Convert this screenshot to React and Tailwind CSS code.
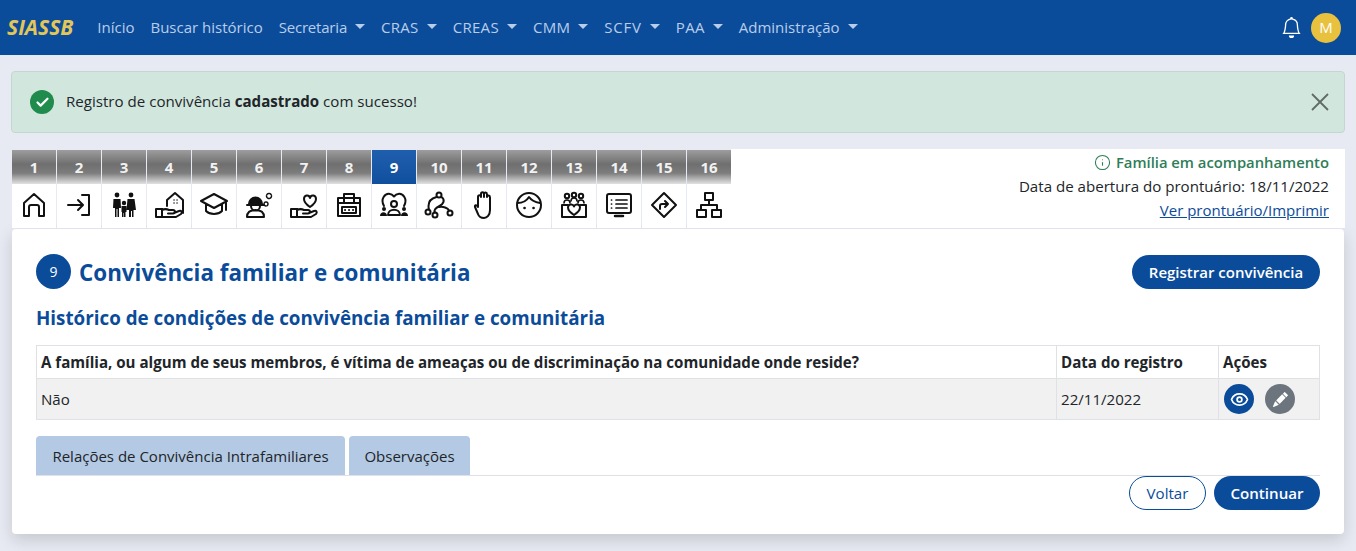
import { Check, Eye, Info } from 'lucide-react';

const menu = [
  { label: 'Início' },
  { label: 'Buscar histórico' },
  { label: 'Secretaria', drop: true, cls: 'tracking-[-0.2px]' },
  { label: 'CRAS', drop: true, cls: 'tracking-[0.3px]' },
  { label: 'CREAS', drop: true, cls: 'tracking-[0.3px]' },
  { label: 'CMM', drop: true, cls: 'tracking-[0.3px]' },
  { label: 'SCFV', drop: true, cls: 'tracking-[0.8px]' },
  { label: 'PAA', drop: true, cls: 'tracking-[0.3px]' },
  { label: 'Administração', drop: true },
];

const Ic = ({ children }) => (
  <svg width="30" height="30" viewBox="0 0 30 30" fill="none" stroke="#111" strokeWidth="2" strokeLinecap="round" strokeLinejoin="round">
    {children}
  </svg>
);

const hand = <path d="M2 19h6v8H2zM8 20c3-1.500 5-1 7 0h4c2.500 0 2.500 3.500 0 3.500h-5M20 23l5-2c2.500-1 3.500 1.500 2 3l-5 3H8" />;

const icons = [
  <Ic><path d="M5 26V13L15 4l10 9v13h-5V17c0-1-1-2-2-2h-6c-1 0-2 1-2 2v9z" /></Ic>,
  <Ic><path d="M4 15h14M14 10l5 5-5 5M18 5h7v20h-7" /></Ic>,
  <Ic>
    <g fill="#111" stroke="none">
      <circle cx="8" cy="5" r="2.400" /><circle cx="22" cy="5" r="2.400" /><circle cx="15" cy="13" r="2.200" />
      <path d="M4.500 9h7l.5 9h-2v9H8.500v-8h-1v8H6v-9H4zM18.500 9h7l1.500 11h-2.500v7H23v-6h-1v6h-2v-7h-2.500zM12.500 16h5v6h-1v5H15v-4h-.5v4H13v-5h-.5z" />
    </g>
  </Ic>,
  <Ic>
    <path d="M13 16v-6l8-7 8 7v13" />{hand}
    <path d="M20 10h.1M23 10h.1M20 13h.1M23 13h.1" strokeWidth="1.400" />
  </Ic>,
  <Ic><path d="M15 4L2 11l13 7 13-7zM7 14v7c4 4 12 4 16 0v-7M27 12v8" /></Ic>,
  <Ic>
    <path d="M5 14a6.500 6.500 0 0 1 13 0z" fill="#111" />
    <path d="M3 15h17M7 16a4.500 4.500 0 0 0 9 0M3 27c0-6 4-7 8.500-7s8.500 1 8.500 7z" />
    <circle cx="25" cy="6" r="2.500" strokeWidth="1.500" strokeDasharray="2 1" /><circle cx="22" cy="14" r="2" strokeWidth="1.500" strokeDasharray="2 1" />
  </Ic>,
  <Ic>
    {hand}
    <path d="M21 17c-3-2-6-4.500-6-8 0-4 5-5 6-1 1-4 6-3 6 1 0 3.500-3 6-6 8z" />
  </Ic>,
  <Ic>
    <path d="M4 8h22v18H4zM10 8V4h10v4M4 13h22M10 8v5M20 8v5M8 17h14v6H8z" />
    <path d="M11 20h.1M15 20h.1M19 20h.1" />
  </Ic>,
  <Ic>
    <path d="M5 16C1 9 6 3 11 4c2 .3 3 1.500 4 2.500 1-1 2-2.200 4-2.500 5-1 10 5 6 12" />
    <circle cx="15" cy="14" r="3" />
    <path d="M9 25c0-7 12-7 12 0z" />
    <g fill="#111" stroke="none"><circle cx="5" cy="19" r="2" /><circle cx="25" cy="19" r="2" /><path d="M1 26c0-5 7-5 7 0zM22 26c0-5 7-5 7 0z" /></g>
  </Ic>,
  <Ic>
    <circle cx="15" cy="5" r="2.500" /><circle cx="4" cy="22" r="2.500" /><circle cx="11" cy="25" r="2.500" /><circle cx="26" cy="23" r="2.500" />
    <path d="M12.500 7c-4 1-8 4-8 9 0 1.500 0 2 .5 3.500M17.500 7c4 3 2 7-2 9s-6 4-4.500 6.500M15 17c4-1 9 1 10 3.500" />
  </Ic>,
  <Ic>
    <path d="M9 17V7c0-2.500 3-2.500 3 0V4c0-2.500 3-2.500 3 0v3-3c0-2 3-2 3 .5V7c0-2 3-2 3 .5V20c0 5-3 8-6 8s-5-1-6-4l-3-7c-.5-2 1.500-2.500 3 0z" />
  </Ic>,
  <Ic>
    <circle cx="15" cy="15" r="12" />
    <path d="M3.500 13c4 0 9-2 11.500-6 2 3 6 5 11 6" />
    <path d="M10.500 18h.1M19.500 18h.1" strokeWidth="2.600" />
  </Ic>,
  <Ic>
    <circle cx="8" cy="6" r="2.200" /><circle cx="15" cy="5" r="2.200" /><circle cx="22" cy="6" r="2.200" />
    <path d="M5 13c0-2 1-3 3-3s3 1 3 3M12 11c0-2 1-3 3-3s3 1 3 3M19 13c0-2 1-3 3-3s3 1 3 3" strokeWidth="1.600" />
    <path d="M9 15H3v12h24V15h-6" />
    <path d="M15 25c-3-2-6-4-6-7.500 0-3.500 5-4 6-1 1-3 6-2.500 6 1 0 3.500-3 5.500-6 7.500z" />
  </Ic>,
  <Ic>
    <rect x="3" y="4" width="24" height="19" rx="2" />
    <path d="M11 26h8" strokeWidth="2.500" />
    <path d="M12 10h11M12 14h11M12 18h11M7.500 10h.1M7.500 14h.1M7.500 18h.1" strokeWidth="1.700" />
  </Ic>,
  <Ic>
    <path d="M15 3l12 12-12 12L3 15z" />
    <path d="M11 19v-3c0-1 1-2 2-2h6M16 11l3 3-3 3" />
  </Ic>,
  <Ic>
    <path d="M11 3h8v7h-8zM3 20h9v7H3zM18 20h9v7h-9zM15 10v5M7 20v-5h16v5" />
  </Ic>,
];

const Stepper = () => (
  <div className="flex shrink-0 gap-px">
    {icons.map((icon, i) => (
      <div key={i} className="w-[44px]">
        <div className={`h-[34px] flex items-center justify-center text-[15px] font-bold ${i === 8 ? 'text-white bg-[linear-gradient(#1f5fae,#0f4f9e)]' : 'text-[#f2f2f2] bg-[linear-gradient(#9d9d9d,#6f6f6f_42%,#7d7d7d_68%,#e2e2e2)]'}`}>
          {i + 1}
        </div>
        <div className="h-[44px] pb-[3px] bg-white flex items-center justify-center">{icon}</div>
      </div>
    ))}
  </div>
);

export default function App() {
  return (
    <div className="min-h-[551px] bg-[#e7eaf2] font-['Open_Sans',sans-serif] text-[15.100px] text-[#212529]">
      <nav className="h-[55px] bg-[#0b4c9a] flex items-center pl-[7px] pr-[15px]">
        <span className="text-[21px] font-bold italic text-[#e3c65a] mr-[24px]">SIASSB</span>
        <ul className="flex gap-[16px] flex-1 text-[#b9cdea] text-[15px]">
          {menu.map((m) => (
            <li key={m.label} className={`flex items-center ${m.cls || ''}`}>
              {m.label}
              {m.drop && <span className="ml-[8px] mt-[-2px] border-x-[5px] border-t-[5px] border-x-transparent border-t-[#b9cdea]" />}
            </li>
          ))}
        </ul>
        <svg width="21" height="21" viewBox="0 0 16 16" fill="#fff" className="mr-[9px]">
          <path d="M8 16a2 2 0 0 0 2-2H6a2 2 0 0 0 2 2zM8 1.918l-.797.161A4.002 4.002 0 0 0 4 6c0 .628-.134 2.197-.459 3.742-.16.767-.376 1.566-.663 2.258h10.244c-.287-.692-.502-1.49-.663-2.258C12.134 8.197 12 6.628 12 6a4.002 4.002 0 0 0-3.203-3.920L8 1.917zM14.220 12c.223.447.481.801.780 1H1c.299-.199.557-.553.780-1C2.680 10.200 3 6.880 3 6c0-2.420 1.720-4.440 4.005-4.901a1 1 0 1 1 1.990 0A5.002 5.002 0 0 1 13 6c0 .880.320 4.200 1.220 6z" />
        </svg>
        <div className="w-[30px] h-[30px] rounded-full bg-[#e8c13f] text-white flex items-center justify-center text-[15px]">M</div>
      </nav>

      <div className="px-[11px] pt-[16px]">
        <div className="h-[62px] bg-[#d1e7dd] border border-[#c5d6cf] rounded-[4px] flex items-center pl-[18px] pr-[15px]">
          <span className="w-[24px] h-[24px] rounded-full bg-[#1f8b4c] flex items-center justify-center mr-[12px]">
            <Check size={15} color="#fff" strokeWidth={3.500} />
          </span>
          <span className="flex-1 mt-[-2px]">Registro de convivência <b>cadastrado</b> com sucesso!</span>
          <svg width="18" height="18" viewBox="0 0 18 18" stroke="#5f6b66" strokeWidth="1.800">
            <path d="M1 1l16 16M17 1L1 17" />
          </svg>
        </div>

        <div className="flex mt-[17px] pl-px">
          <Stepper />
          <div className="flex-1 bg-white text-right pr-[16px] leading-[24px] mt-[-1px] pt-[1px] pb-[2px]">
            <div className="font-semibold text-[14.800px] text-[#2e7d57] flex items-center justify-end gap-[5px]">
              <Info size={17} strokeWidth={1.500} /> Família em acompanhamento
            </div>
            <div>Data de abertura do prontuário: 18/11/2022</div>
            <a href="#" className="text-[#0b4c9a] underline text-[15px]">Ver prontuário/Imprimir</a>
          </div>
        </div>

        <div className="mt-[1px] mx-px h-[305px] bg-white rounded-[4px] shadow-[0_6px_16px_rgba(0,0,0,0.15)] px-[24px] pt-[25px]">
          <div className="flex items-center justify-between h-[36px]">
            <div className="flex items-center gap-[8px]">
              <span className="w-[35px] h-[35px] rounded-full bg-[#0b4c9a] text-white flex items-center justify-center text-[14px]">9</span>
              <h1 className="mt-[2px] text-[22.400px] font-bold text-[#0b4c9a]">Convivência familiar e comunitária</h1>
            </div>
            <button className="h-[34px] w-[188px] rounded-full bg-[#0b4c9a] text-white font-semibold text-[15px]">Registrar convivência</button>
          </div>
          <h2 className="mt-[14px] text-[18.800px] leading-[28px] font-bold text-[#0b4c9a]">Histórico de condições de convivência familiar e comunitária</h2>
          <table className="mt-[13px] w-full border-collapse">
            <thead>
              <tr className="h-[33px] font-bold text-left">
                <th className="border border-[#dee2e6] px-[4px]">A família, ou algum de seus membros, é vítima de ameaças ou de discriminação na comunidade onde reside?</th>
                <th className="border border-[#dee2e6] px-[4px] w-[162px]">Data do registro</th>
                <th className="border border-[#dee2e6] px-[4px] w-[101px]">Ações</th>
              </tr>
            </thead>
            <tbody>
              <tr className="h-[41px] bg-[#f1f1f1]">
                <td className="border border-[#dee2e6] px-[4px]">Não</td>
                <td className="border border-[#dee2e6] px-[4px]">22/11/2022</td>
                <td className="border border-[#dee2e6] px-[5px]">
                  <div className="flex gap-[11px]">
                    <span className="w-[30px] h-[30px] rounded-full bg-[#0b4c9a] flex items-center justify-center"><Eye size={19} color="#fff" strokeWidth={2.200} /></span>
                    <span className="w-[30px] h-[30px] rounded-full bg-[#6c757d] flex items-center justify-center">
                      <svg width="15" height="15" viewBox="0 0 16 16" fill="#fff">
                        <path d="M12.854.146a.5.5 0 0 0-.707 0L10.500 1.793 14.207 5.500l1.647-1.646a.5.5 0 0 0 0-.708l-3-3zm.646 6.061L9.793 2.500 3.293 9H3.500a.5.5 0 0 1 .5.5v.5h.5a.5.5 0 0 1 .5.5v.5h.5a.5.5 0 0 1 .5.5v.5h.5a.5.5 0 0 1 .5.5v.207l6.500-6.500zm-7.468 7.468A.5.5 0 0 1 6 13.500V13h-.5a.5.5 0 0 1-.5-.5V12h-.5a.5.5 0 0 1-.5-.5V11h-.5a.5.5 0 0 1-.5-.5V10h-.5a.499.499 0 0 1-.175-.032l-.179.178a.5.5 0 0 0-.11.168l-2 5a.5.5 0 0 0 .650.650l5-2a.5.5 0 0 0 .168-.11l.178-.178z" />
                      </svg>
                    </span>
                  </div>
                </td>
              </tr>
            </tbody>
          </table>
          <div className="mt-[16px] flex gap-[4px] border-b border-[#dee2e6] text-[15px]">
            <div className="h-[39px] w-[309px] bg-[#b4cae4] rounded-t-[4px] pt-[1px] flex items-center justify-center">Relações de Convivência Intrafamiliares</div>
            <div className="h-[39px] w-[121px] bg-[#b4cae4] rounded-t-[4px] pt-[1px] flex items-center justify-center">Observações</div>
          </div>
          <div className="flex justify-end gap-[8px]">
            <button className="h-[34px] w-[77px] rounded-full border border-[#0b4c9a] text-[#0b4c9a] bg-white">Voltar</button>
            <button className="h-[34px] w-[106px] rounded-full bg-[#0b4c9a] text-white font-semibold">Continuar</button>
          </div>
        </div>
      </div>
    </div>
  );
}
